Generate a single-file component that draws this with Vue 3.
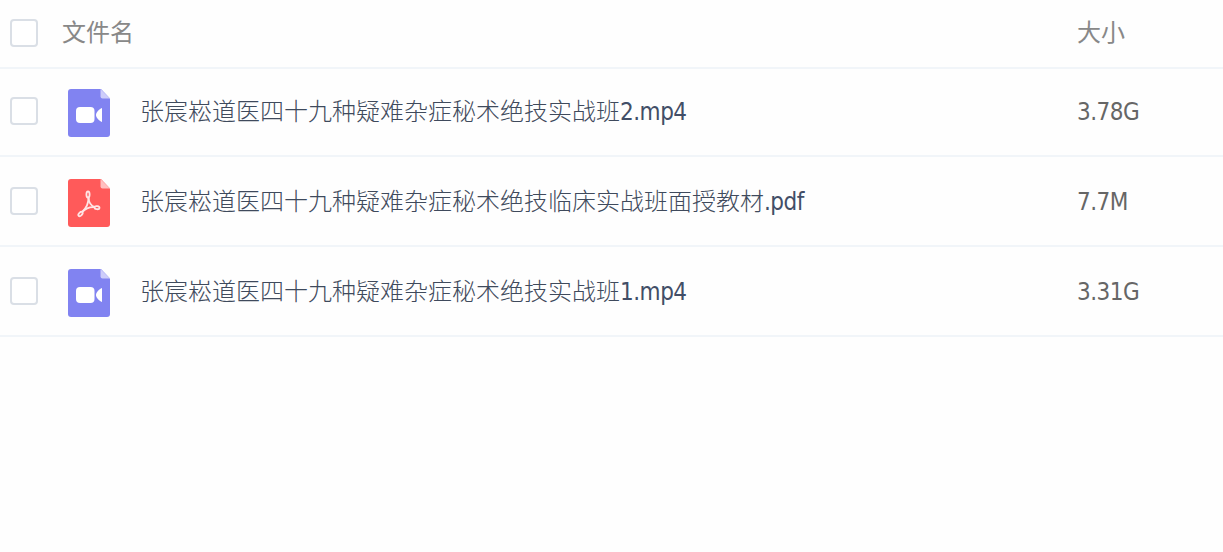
<script setup>
import { ref } from "vue";

const files = ref([
  {
    id: 1,
    name: "张宸崧道医四十九种疑难杂症秘术绝技实战班",
    suffix: "2.mp4",
    type: "video",
    size: "3.78G",
    checked: false,
  },
  {
    id: 2,
    name: "张宸崧道医四十九种疑难杂症秘术绝技临床实战班面授教材",
    suffix: ".pdf",
    type: "pdf",
    size: "7.7M",
    checked: false,
  },
  {
    id: 3,
    name: "张宸崧道医四十九种疑难杂症秘术绝技实战班",
    suffix: "1.mp4",
    type: "video",
    size: "3.31G",
    checked: false,
  },
]);

const allChecked = ref(false);

const toggleAll = () => {
  files.value.forEach((file) => {
    file.checked = allChecked.value;
  });
};
</script>

<template>
  <main>
    <div class="head">
      <input v-model="allChecked" type="checkbox" class="check" @change="toggleAll" />
      <span class="title">文件名</span>
      <span class="size">大小</span>
    </div>

    <div v-for="file in files" :key="file.id" class="file">
      <input v-model="file.checked" type="checkbox" class="check" />
      <svg class="icon" :class="file.type" viewBox="0 0 42 48">
        <path class="page" d="M3 0H33L42 9.5V45a3 3 0 0 1-3 3H3a3 3 0 0 1-3-3V3a3 3 0 0 1 3-3z" />
        <path class="fold" d="M32.500 0L42 9.500H34.500a2 2 0 0 1-2-2z" />
        <g v-if="file.type === 'video'" class="camera">
          <rect x="8" y="18" width="18.500" height="16" rx="4" />
          <path d="M34 19v14c-3-1-6-4.500-6-7s3-6 6-7z" />
        </g>
        <g v-else class="acrobat">
          <ellipse cx="20" cy="15.500" rx="1.600" ry="3" />
          <ellipse cx="12.500" cy="35" rx="1.500" ry="2.600" transform="rotate(45 12.500 35)" />
          <ellipse cx="29" cy="28.700" rx="2.500" ry="1.500" transform="rotate(8 29 28.700)" />
          <path d="M20.500 18.500C20.800 24 23 27 27 28.200" />
          <path d="M20.500 18.500C20.600 25 18 29.500 14 33.200" />
          <path d="M14 33.200C17.500 29.500 21.500 27.500 27 28.200" />
        </g>
      </svg>
      <span class="name">{{ file.name }}<span class="suffix">{{ file.suffix }}</span></span>
      <span class="size">{{ file.size }}</span>
    </div>
  </main>
</template>

<style>
body {
  background-color: #fefefe;
}
</style>

<style scoped>
main {
  font-family: "DejaVu Sans Condensed", "Noto Sans CJK SC", sans-serif;
  font-size: 24px;
  line-height: 36px;
}
.head,
.file {
  display: flex;
  align-items: center;
  box-sizing: border-box;
  height: 90px;
  padding-left: 10px;
  border-bottom: 2px solid #f1f5f9;
}
.head {
  height: 69px;
  color: #888;
}
/* the first row shares its top edge with the header line */
.head + .file {
  margin-top: -2px;
}
.check {
  appearance: none;
  flex: none;
  box-sizing: border-box;
  width: 28px;
  height: 28px;
  margin: 0;
  border: 2px solid #dadfe6;
  border-radius: 4px;
  background-color: #fff;
}
.head .check {
  margin-bottom: 1px;
}
.check:checked {
  background-color: #8183f1;
}
.title {
  flex: 1;
  margin-left: 24px;
  padding-bottom: 2px;
}
.icon {
  flex: none;
  width: 42px;
  height: 48px;
  margin: 4px 0 0 30px;
}
.video .page {
  fill: #8183f1;
}
.video .fold {
  fill: #cdcdfa;
}
.pdf .page {
  fill: #ff5a5a;
}
.pdf .fold {
  fill: #ffc0c0;
}
.camera {
  fill: #fff;
}
.acrobat {
  fill: none;
  stroke: #ffe4e4;
  stroke-width: 1.8;
  stroke-linejoin: round;
}
.name {
  flex: 1;
  margin-left: 30px;
  padding-top: 2px;
  color: #3f4a5c;
  font-weight: 300;
  white-space: nowrap;
}
.suffix {
  color: #424e67;
  font-weight: 400;
  letter-spacing: -0.5px;
}
.size {
  flex: none;
  width: 146px;
  padding-top: 2px;
  color: #666;
  letter-spacing: -0.5px;
}
.head .size {
  padding: 0 0 2px;
  color: #888;
  letter-spacing: 0;
}
</style>
